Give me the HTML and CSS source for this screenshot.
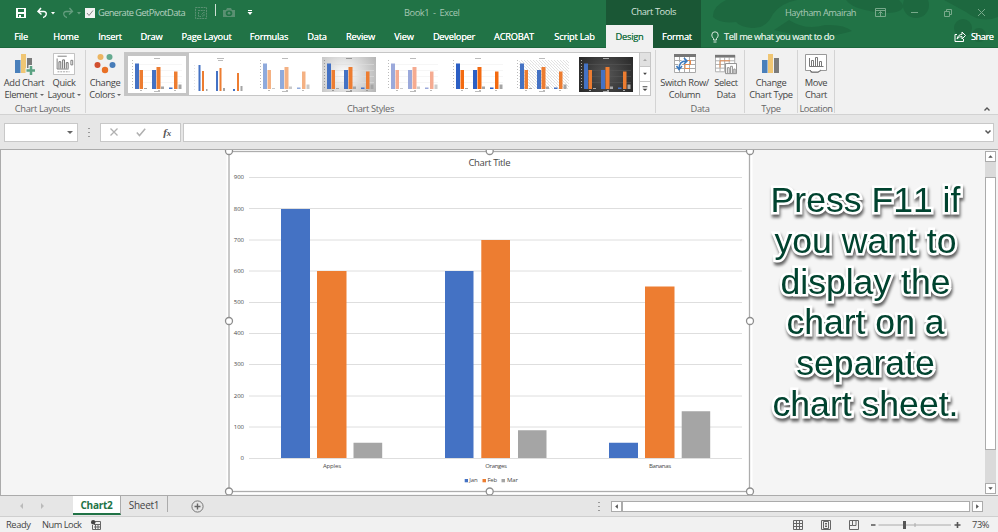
FILE: index.html
```
<!DOCTYPE html>
<html lang="en">
<head>
  <meta charset="UTF-8">
  <title>Book1 - Excel</title>
  <link rel="stylesheet" href="styles.css">
</head>
<body>
  <!-- shared drawing for the style gallery -->
  <svg class="defs">
    <symbol id="mini" viewBox="0 0 54 35">
      <path class="grid" d="M5 7.500H52M5 13.500H52M5 19.500H52M5 25.500H52"/>
      <path class="ticks" d="M2.500 3V33" stroke-dasharray="1 2"/>
      <path class="ticks" d="M24 1.500H30M24 34.500H30M10 33.500H12M28 33.500H30M44 33.500H46"/>
      <path class="jan" d="M5 6.500H9V32H5zM22 13H26V32H22zM39 30.500H42.500V32H39z"/>
      <path class="feb" d="M9.500 13H13V32H9.500zM26.500 10H30.500V32H26.500zM44 14.500H47.500V32H44z"/>
      <path class="mar" d="M14 31H17V32H14zM31 29.500H34V32H31zM48.500 27.500H51.500V32H48.500z"/>
    </symbol>
    <symbol id="mini-thin" viewBox="0 0 54 35">
      <path class="ticks faint" d="M1.500 8V34" stroke-dasharray="1 2"/>
      <path class="ticks" d="M24 1.500H31M25 3.500H30"/>
      <path class="mar" d="M13 32H14.500V34H13zM30 31H32V34H30zM47.500 29H49.500V34H47.500z"/>
      <path class="jan" d="M5.500 8H7.500V34H5.500zM23 14H25V34H23zM40 32H42V34H40z"/>
      <path class="feb" d="M9 14H11V34H9zM26.500 11H28.500V34H26.500zM44 16H46V34H44z"/>
    </symbol>
    <pattern id="hatch" width="3" height="3" patternUnits="userSpaceOnUse">
      <path d="M0 0L3 3" stroke="#ccc" stroke-width=".6"/>
    </pattern>
  </svg>

  <header class="top">
    <svg class="swirls" viewBox="0 0 297 48">
      <path d="M25 0H96Q80 3 72 14Q65 29 51 28Q39 27 35 22Q19 24 12 17Q11 7 25 0Z"/>
      <path d="M88 20Q105 31 124 25Q143 24 151 31Q119 42 73 30Z"/>
      <path d="M145 0H198Q205 6 200 10Q190 16 164 10Q150 7 145 0Z"/>
      <circle cx="215" cy="5" r="13"/><circle cx="262" cy="28" r="9"/>
      <circle cx="278" cy="35" r="7"/><path d="M243 0H297V17Q280 24 265 12Z"/>
    </svg>
    <div class="titlebar">
      <svg class="c-save" viewBox="0 0 12 12"><path fill="#fff" fill-rule="evenodd" d="M1 1H11V11H1zM3 2V5H9V2zM3 7V10H4V8H6V10H9V7z"/></svg>
      <svg class="c-undo" viewBox="0 0 20 12"><path fill="none" stroke="#fff" stroke-width="1.500" d="M5 1L2 4.500L5.500 7.500M2 4.500H8Q11 5 10 8Q9 10.500 7 10.500"/><path fill="#fff" d="M15 5H19L17 7.500z"/></svg>
      <svg class="c-redo" viewBox="0 0 20 12"><g opacity=".3"><path fill="none" stroke="#fff" stroke-width="1.300" d="M7.500 1L10.500 4.500L7 7.500M10.500 4.500H4Q1 5 2 8Q3 10.500 5 10.500"/><path fill="#fff" d="M15 5H19L17 7.500z"/></g></svg>
      <svg class="c-check" viewBox="0 0 10 10"><path fill="#f3f3f3" d="M0 0H10V10H0z"/><path fill="none" stroke="#888" d="M2 5L4 7.500L8 2.500"/></svg>
      <span class="c-pivot">Generate GetPivotData</span>
      <svg class="c-pivoticon" viewBox="0 0 12 12"><path fill="none" stroke="#5a9072" d="M.5.500H11.500V11.500H.5zM3 3.500H10M3.500 5V9.500H6M6.500 7.500L9 5V9H7" stroke-dasharray="2 .7"/></svg>
      <i class="c-bar"></i>
      <svg class="c-cam" viewBox="0 0 12 10"><path fill="#5a9072" fill-rule="evenodd" d="M0 2H3L4 0H8L9 2H12V9H0zM6 2.500A2.800 2.800 0 1 0 6 8A2.800 2.800 0 1 0 6 2.500"/><circle cx="6" cy="5.200" r="1.400" fill="#5a9072"/></svg>
      <svg class="c-more" viewBox="0 0 6 7"><path fill="#fff" d="M1 1H5V2H1zM.5 3H5.500L3 6z"/></svg>
      <span class="c-title">Book1&nbsp; -&nbsp; Excel</span>
      <span class="c-tools">Chart Tools</span>
      <span class="c-user">Haytham Amairah</span>
      <svg class="c-winopt" viewBox="0 0 11 9"><path class="line" d="M.5.500H10.500V8.500H.5zM1 2.500H10M5.500 8V4M3.500 5.500L5.500 3.500L7.500 5.500"/></svg>
      <svg class="c-min" viewBox="0 0 9 9"><path class="line" d="M1 4.500H8"/></svg>
      <svg class="c-restore" viewBox="0 0 9 9"><path class="line" d="M1.500 3.500H6.500V8.500H1.500zM3.500 3V1.500H8.500V6.500H7"/></svg>
      <svg class="c-close" viewBox="0 0 9 9"><path class="line" d="M1 1L8 8M8 1L1 8"/></svg>
    </div>
    <nav class="tabs">
      <a>File</a><a>Home</a><a>Insert</a><a>Draw</a><a>Page Layout</a><a>Formulas</a><a>Data</a>
      <a>Review</a><a>View</a><a>Developer</a><a>ACROBAT</a><a>Script Lab</a>
      <a class="active">Design</a><a class="context">Format</a>
      <svg class="bulb" viewBox="0 0 8 12"><path fill="none" stroke="#d7e7dd" d="M2.500 9V7.500Q.8 6 .8 4A3.200 3.200 0 0 1 7.200 4Q7.200 6 5.500 7.500V9zM2.500 11H5.500"/></svg>
      <span class="tell">Tell me what you want to do</span>
      <svg class="share-icon" viewBox="0 0 12 11"><path fill="none" stroke="#fff" d="M3 3.500H1V10.500H9.500V8M3 8Q4 3.500 8 3.500V1L11.500 4.500L8 8V5.500Q5 5.300 3 8Z"/></svg>
      <span class="share">Share</span>
    </nav>
  </header>

  <section class="ribbon">
    <div class="group g-layouts">
      <div class="tools">
        <div class="tool">
          <svg viewBox="0 0 22 22"><path fill="#4a80bb" d="M2 7H7.500V20H2z"/><path fill="#f0c674" d="M8 1H13V20H8z"/><path fill="#7b7b7b" d="M14 5H19V20H14z"/><path stroke="#f1f1f1" stroke-width="5" d="M18 12V22M12.500 17.500H22"/><path stroke="#5ba283" stroke-width="2.500" d="M18 13V22M13.500 17.500H22"/></svg>
          <span>Add Chart</span><span>Element <i class="dd"></i></span>
        </div>
        <div class="tool">
          <svg viewBox="0 0 24 24"><path fill="#fff" stroke="#bbb" d="M.5.500H23.500V23.500H.5z"/><path fill="none" stroke="#777" d="M5 3.500H15M4.500 6V17.500H17M19.500 8V13H21.500V8z"/><path fill="none" stroke="#666" d="M6.500 17V9.500H8.500V17M10.500 17V7.500H12.500V17M14.500 17V10.500H16.500V17"/><path stroke="#999" stroke-dasharray="2 1" d="M5 20.500H18"/></svg>
          <span>Quick</span><span>Layout <i class="dd"></i></span>
        </div>
      </div>
      <div class="caption">Chart Layouts</div>
    </div>
    <div class="group g-styles">
      <div class="tools">
        <div class="tool">
          <svg viewBox="0 0 22 22"><circle cx="6.500" cy="4" r="3" fill="#ecb561"/><circle cx="15.500" cy="4" r="3" fill="#65aa90"/><circle cx="3.500" cy="12" r="3" fill="#d2502f"/><circle cx="18.500" cy="12" r="3" fill="#477cb8"/><circle cx="11" cy="17" r="3.200" fill="#e97025"/></svg>
          <span>Change</span><span>Colors <i class="dd"></i></span>
        </div>
        <div class="gallery">
          <svg class="thumb selected"><use href="#mini"/></svg>
          <svg class="thumb"><use href="#mini-thin"/></svg>
          <svg class="thumb soft"><use href="#mini"/></svg>
          <svg class="thumb gray"><use href="#mini"/></svg>
          <svg class="thumb pale"><use href="#mini"/></svg>
          <svg class="thumb vivid"><use href="#mini"/></svg>
          <svg class="thumb"><rect x="4" y="3" width="50" height="29" fill="url(#hatch)"/><use href="#mini"/></svg>
          <svg class="thumb dark"><use href="#mini"/></svg>
        </div>
        <div class="gallery-nav">
          <svg class="off" viewBox="0 0 10 14"><path d="M3 8.500H7L5 6z"/></svg>
          <svg viewBox="0 0 10 14"><path d="M3 6H7L5 8.500z"/></svg>
          <svg viewBox="0 0 10 14"><path d="M2.500 4.500H7.500V5.500H2.500zM2.500 7H7.500L5 9.500z"/></svg>
        </div>
      </div>
      <div class="caption">Chart Styles</div>
    </div>
    <div class="group g-data">
      <div class="tools">
        <div class="tool">
          <svg viewBox="0 0 22 22"><path fill="#fff" stroke="#aaa" d="M.5 2.500H21.500V19.500H.5zM.5 7.500H21.500M.5 11.500H21.500M.5 15.500H21.500M5.500 4V19M10.500 4V19M15.500 4V19"/><path fill="#777" d="M0 1H22V4H0z"/><path fill="none" stroke="#e98a4a" d="M10 7.500H16.500V11.500H11V15.500H16"/><path fill="none" stroke="#fff" stroke-width="3" d="M5 16Q5 8 12 8"/><path fill="none" stroke="#3a78bd" stroke-width="1.600" d="M5 16Q5 8 12 8M10 5L13 8L10 11M2.500 13L5 16.500L8 13"/></svg>
          <span>Switch Row/</span><span>Column</span>
        </div>
        <div class="tool">
          <svg viewBox="0 0 24 22"><path fill="#fff" stroke="#aaa" d="M.5 2.500H21.500V19.500H.5zM.5 7.500H21.500M.5 11.500H21.500M.5 15.500H21.500M5.500 4V19M10.500 4V19M15.500 4V19"/><path fill="#777" d="M0 1H22V4H0z"/><path fill="none" stroke="#e98a4a" d="M5.500 15V7.500H16.500"/><path fill="#fff" stroke="#888" d="M11.500 10.500H23.500V21.500H11.500zM13.500 21V15H15.500V21M17 21V13.500H19V21M20.500 21V16.500H22V21"/></svg>
          <span>Select</span><span>Data</span>
        </div>
      </div>
      <div class="caption">Data</div>
    </div>
    <div class="group g-type">
      <div class="tools">
        <div class="tool">
          <svg viewBox="0 0 22 22"><path fill="#4a80bb" d="M2 7H7.500V20H2z"/><path fill="#f0c674" d="M8 1H13V20H8z"/><path fill="#7b7b7b" d="M14 5H19V20H14z"/></svg>
          <span>Change</span><span>Chart Type</span>
        </div>
      </div>
      <div class="caption">Type</div>
    </div>
    <div class="group g-location">
      <div class="tools">
        <div class="tool">
          <svg viewBox="0 0 22 22"><path fill="#fff" stroke="#999" d="M.5 1.500H21.500V17.500H16L13 19.500H6L5 17.500H.5z"/><path fill="none" stroke="#777" d="M4.500 5V13.500H18.500M6.500 13V7.500H8.500V13M10.500 13V4.500H12.500V13M14.500 13V8.500H16.500V13M5 17L7 19H13L16 17"/></svg>
          <span>Move</span><span>Chart</span>
        </div>
      </div>
      <div class="caption">Location</div>
    </div>
    <svg class="collapse" viewBox="0 0 8 6"><path fill="none" stroke="#555" stroke-width="1.400" d="M1.500 4.500L4 2L6.500 4.500"/></svg>
  </section>

  <section class="formula">
    <div class="namebox"><i class="dd"></i></div>
    <i class="grip"></i>
    <div class="fx">
      <svg viewBox="0 0 10 10"><path fill="none" stroke="#b0b0b0" stroke-width="1.300" d="M1.500 1.500L8.500 8.500M8.500 1.500L1.500 8.500"/></svg>
      <svg viewBox="0 0 10 10"><path fill="none" stroke="#b0b0b0" stroke-width="1.500" d="M.8 5.500L3.500 8.500L9.200 1.800"/></svg>
      <em>f<small>x</small></em>
    </div>
    <div class="input"><svg viewBox="0 0 8 6"><path fill="none" stroke="#555" stroke-width="1.500" d="M1.500 1.500L4 4L6.500 1.500"/></svg></div>
  </section>

  <main class="sheet">
    <svg class="chart" viewBox="223 150 534 345">
      <rect x="229" y="151.500" width="521" height="340" fill="#fff" stroke="#fff" stroke-width="5"/>
      <rect x="229" y="151.500" width="520.500" height="340" fill="#fff" stroke="#adadad" stroke-width="1.300"/>
      <text class="chart-title" x="489.500" y="166" textLength="42">Chart Title</text>
      <path stroke="#dedede" d="M249 177.500H742M249 208.500H742M249 240H742M249 271H742M249 302.500H742M249 333.500H742M249 364.500H742M249 396H742M249 427H742M249 458.500H742"/>
      <g class="axis">
        <text x="244" y="179">900</text><text x="244" y="210.500">800</text>
        <text x="244" y="241.500">700</text><text x="244" y="272.500">600</text>
        <text x="244" y="304">500</text><text x="244" y="335">400</text>
        <text x="244" y="366">300</text><text x="244" y="397.500">200</text>
        <text x="244" y="428.500">100</text><text x="244" y="460">0</text>
      </g>
      <path fill="#4472c4" d="M281 209H310V458H281zM445 271H473.500V458H445zM609 442.700H638V458H609z"/>
      <path fill="#ed7d31" d="M317 271H346.500V458H317zM481.300 240H510V458H481.300zM645 286.500H674.500V458H645z"/>
      <path fill="#a5a5a5" d="M353.500 442.700H382.200V458H353.500zM518 430.300H546.500V458H518zM681.700 411.300H710.200V458H681.700z"/>
      <g class="cats">
        <text x="332" y="468.300" textLength="18">Apples</text>
        <text x="496" y="468.300" textLength="21.500">Oranges</text>
        <text x="660" y="468.300" textLength="22">Bananas</text>
        <text x="473.500" y="482.300" textLength="8.500">Jan</text>
        <text x="492.300" y="482.300" textLength="9.500">Feb</text>
        <text x="512.500" y="482.300" textLength="11">Mar</text>
      </g>
      <path fill="#4472c4" d="M464.700 479H468V482.300H464.700z"/>
      <path fill="#ed7d31" d="M482.500 479H486V482.300H482.500z"/>
      <path fill="#a5a5a5" d="M501.500 479H505V482.300H501.500z"/>
      <g fill="#fff" stroke="#8e8e8e" stroke-width="1.300">
        <circle cx="229" cy="151" r="3.500"/><circle cx="489.700" cy="151" r="3.500"/><circle cx="750" cy="151" r="3.500"/>
        <circle cx="229" cy="321" r="3.500"/><circle cx="750" cy="321" r="3.500"/>
        <circle cx="229" cy="491.500" r="3.500"/><circle cx="489.700" cy="491.500" r="3.500"/><circle cx="750" cy="491.500" r="3.500"/>
      </g>
    </svg>
    <p class="note">Press F11 if<br>you want to<br>display the<br>chart on a<br>separate<br>chart sheet.</p>
    <div class="vscroll">
      <svg viewBox="0 0 10 10"><path d="M2.500 6.500H7.500L5 3.500z"/></svg>
      <i></i>
      <svg viewBox="0 0 10 10"><path d="M2.500 3.500H7.500L5 6.500z"/></svg>
    </div>
  </main>

  <div class="sheetbar">
    <svg class="nav" viewBox="0 0 73 20"><path fill="#bbb" d="M23 7V13L20 10zM41 7V13L44 10z"/></svg>
    <span class="sheet-tab current">Chart2</span>
    <span class="sheet-tab">Sheet1</span>
    <svg class="add" viewBox="0 0 13 13"><circle cx="6.500" cy="6.500" r="5.600" fill="none" stroke="#777"/><path stroke="#666" stroke-width="1.400" d="M3.500 6.500H9.500M6.500 3.500V9.500"/></svg>
    <i class="grip"></i>
    <div class="hscroll">
      <svg viewBox="0 0 10 10"><path d="M6.500 2.500V7.500L3.500 5z"/></svg>
      <i></i>
      <svg viewBox="0 0 10 10"><path d="M3.500 2.500V7.500L6.500 5z"/></svg>
    </div>
  </div>

  <footer class="status">
    <span class="ready">Ready</span>
    <span class="numlock">Num Lock</span>
    <svg class="macro" viewBox="0 0 10 10"><path fill="none" stroke="#666" d="M4 1.500H9.500V9.500H1.500V5M3 4.500H9M3 7H9M4.500 4V9M7 4V9"/><circle cx="2.200" cy="2.200" r="2.200" fill="#444"/></svg>
    <svg class="view" viewBox="0 0 10 10"><path class="line" d="M.5.500H9.500V9.500H.5zM.5 3.500H9.500M.5 6.500H9.500M3.500 .5V9.500M6.500 .5V9.500"/></svg>
    <svg class="view" viewBox="0 0 10 10"><path class="line" d="M.5.500H9.500V9.500H.5zM2.500 1.500H7.500V8.500H2.500zM4 3.500H6M4 5H6M4 6.500H6"/></svg>
    <svg class="view" viewBox="0 0 10 10"><path class="line" d="M.5.500H9.500V9.500H.5zM3.500 .5V5.500H7V.5M.5 5.500H3.500"/></svg>
    <svg class="zoom" viewBox="0 0 92 10"><path stroke="#555" stroke-width="1.600" d="M1 5H5.500M84.500 5H90.500M87.500 2V8"/><path stroke="#aaa" d="M8.500 5H81M45 3V7"/><path fill="#555" d="M33 1H36V9H33z"/></svg>
    <span class="pct">73%</span>
  </footer>
</body>
</html>
```
FILE: styles.css
```
* {
  box-sizing: border-box;
}

body {
  margin: 0;
  width: 998px;
  height: 532px;
  overflow: hidden;
  display: flex;
  flex-direction: column;
  background: #e6e6e6;
  color: #444;
  font-family: "Open Sans", "Noto Sans", sans-serif;
  font-size: 9.3px;
  letter-spacing: -0.25px;
  line-height: 12px;
  white-space: nowrap;
}

svg {
  display: block;
}

.defs {
  position: absolute;
  width: 0;
  height: 0;
}

/* title bar and tabs */
.top {
  position: relative;
  height: 48px;
  flex: none;
  background: #217346;
  color: #fff;
  border-bottom: 1px solid #1b673c;
}

.swirls {
  position: absolute;
  right: 0;
  top: 0;
  width: 297px;
  height: 48px;
  fill: #1d683f;
}

.titlebar {
  position: relative;
  height: 25px;
  display: grid;
  grid-template-columns: 15px 12px 9px 20px 6px 20px 3px 10px 3px 93px 4px 12px 8px 8px 12px 12px 6px 105px 114px 134px 95px 72px 84px 18px 11px 24px 9px 24px 9px 25px 9px;
  align-items: center;
}

.c-save { grid-column: 2; }
.c-undo { grid-column: 4; }
.c-redo { grid-column: 6; }
.c-check { grid-column: 8; }
.c-pivot { grid-column: 10; color: #b5d1c0; letter-spacing: -0.62px; }
.c-pivoticon { grid-column: 12; }
.c-bar { grid-column: 14; width: 1px; height: 12px; background: #d0e0d6; margin: 0 0 5px; }
.c-cam { grid-column: 15; }
.c-more { grid-column: 17; }
.c-title { grid-column: 19; padding-left: 46px; color: #a5c7b3; letter-spacing: -0.45px; }
.c-tools { grid-column: 21; align-self: stretch; line-height: 24px; text-align: center; background: #1a5735; color: #d5e3db; letter-spacing: -0.4px; }
.c-user { grid-column: 23; padding-left: 12px; color: #aac9b7; letter-spacing: -0.5px; }
.c-winopt { grid-column: 25; }
.c-min { grid-column: 27; }
.c-restore { grid-column: 29; }
.c-close { grid-column: 31; }

.titlebar .line {
  fill: none;
  stroke: #78a98b;
}

.tabs {
  position: relative;
  height: 23px;
  display: grid;
  grid-template-columns: 42px 48px 40px 43px 67px 58px 38px 49px 38px 62px 58px 63px 47px 48px 10px 8px 5px 110px 120px 12px 5px 26px;
  align-items: center;
  line-height: 23px;
  text-align: center;
  text-shadow: 0 0 0.5px currentColor;
}

.active {
  background: #f1f1f1;
  color: #217346;
}

.context {
  background: #1a5735;
}

.bulb { grid-column: 16; }
.tell { grid-column: 18; text-align: left; color: #d7e7dd; letter-spacing: -0.45px; }
.share-icon { grid-column: 20; }
.share { grid-column: 22; text-align: left; letter-spacing: -0.5px; }

/* ribbon */
.ribbon {
  height: 67px;
  flex: none;
  display: flex;
  background: #f1f1f1;
  border-bottom: 1px solid #d2d2d2;
  letter-spacing: -0.35px;
}

.group {
  height: 63px;
  margin-top: 2px;
  display: flex;
  flex-direction: column;
  justify-content: space-between;
  border-right: 1px solid #d4d4d4;
}

.g-layouts { width: 86px; }
.g-styles { width: 570px; }
.g-data { width: 89px; }
.g-type { width: 53px; }
.g-location { width: 37px; }

.tools {
  display: flex;
  height: 51px;
}

.caption {
  height: 12px;
  line-height: 16px;
  text-align: center;
  color: #666;
}

.tool {
  width: 38px;
  flex: none;
  padding-top: 3px;
  display: flex;
  flex-direction: column;
  align-items: center;
}

.tool svg {
  width: 22px;
  height: 22px;
  margin-bottom: 2px;
}

.tool span {
  display: flex;
  align-items: center;
  gap: 2px;
}

.g-layouts .tool { width: 48px; }
.g-layouts .tool + .tool { width: 32px; }
.g-data .tool { width: 57px; }
.g-data .tool + .tool { width: 26px; }
.g-type .tool { width: 52px; }
.g-location .tool { width: 36px; }
.g-location .caption { letter-spacing: -0.5px; }

.dd {
  width: 0;
  border: 2px solid transparent;
  border-top: 2.5px solid #666;
  border-bottom: 0;
}

.gallery {
  width: 516px;
  height: 44px;
  margin-top: 2px;
  display: flex;
  align-items: center;
  gap: 10.35px;
  padding-left: 2px;
  background: #fff;
  border: 1px solid #c6c6c6;
}

.thumb {
  width: 54px;
  height: 35px;
  flex: none;
  --jan: #4472c4;
  --feb: #ed7d31;
  --mar: #a5a5a5;
  --tick: #bbb;
  --grid: #f0f0f0;
}

.selected {
  box-sizing: content-box;
  border: 3px solid #c5c5c5;
  padding: 1px 2px;
  margin-left: -2px;
  margin-right: -6px;
}

.soft { --jan: #8faadc; --feb: #f4b183; --mar: #c9c9c9; --grid: #fff; }
.gray { background: radial-gradient(circle at 40% 50%, #fff, #b5b5b5); --grid: #ddd; --tick: #999; }
.pale { --jan: #9ba9db; --feb: #f5ab91; --mar: #ccc; }
.vivid { --jan: #2c5fc4; --feb: #f36a10; }
.dark { background: radial-gradient(circle, #555, #282828); --tick: #aaa; --grid: #555; }

.jan { fill: var(--jan); }
.feb { fill: var(--feb); }
.mar { fill: var(--mar); }
.ticks { fill: none; stroke: var(--tick); }
.faint { opacity: 0.4; }
.grid { fill: none; stroke: var(--grid); stroke-width: 0.6; }

.gallery-nav {
  width: 11px;
  height: 44px;
  margin-top: 2px;
  display: flex;
  flex-direction: column;
}

.gallery-nav svg {
  flex: 1;
  min-height: 0;
  width: 11px;
  background: #fff;
  border: 1px solid #c6c6c6;
  border-left: 0;
  margin-top: -1px;
  fill: #444;
}

.gallery-nav svg:first-child { margin-top: 0; }
.gallery-nav .off { background: #e1e1e1; fill: #aaa; }

.collapse {
  width: 8px;
  height: 6px;
  margin: 58px 7px 0 auto;
}

/* formula bar */
.formula {
  height: 35px;
  flex: none;
  display: flex;
  align-items: center;
  padding: 0 4px;
  border-bottom: 1px solid #ababab;
}

.namebox, .fx, .input {
  height: 19px;
  background: #fff;
  border: 1px solid #c8c8c8;
  display: flex;
  align-items: center;
}

.namebox {
  width: 74px;
  justify-content: flex-end;
  padding-right: 4px;
}

.namebox .dd {
  border-width: 3.5px 3px 0;
}

.grip {
  width: 2px;
  height: 9px;
  margin: 0 10px;
  background: repeating-linear-gradient(#999 0 1px, transparent 1px 4px);
}

.fx {
  width: 81px;
  justify-content: space-between;
  padding: 0 9px 0 8px;
}

.fx svg {
  width: 10px;
  height: 10px;
}

.fx em {
  font: italic bold 11px/14px "Liberation Serif", serif;
  color: #555;
}

.fx small {
  font-size: 9px;
}

.input {
  flex: 1;
  margin-left: 2px;
  justify-content: flex-end;
  padding-right: 1px;
}

.input svg {
  width: 8px;
  height: 6px;
}

/* chart sheet */
.sheet {
  height: 345px;
  flex: none;
  display: flex;
  background: #f5f5f5;
  border-left: 1px solid #ababab;
}

.chart {
  width: 534px;
  height: 345px;
  flex: none;
  margin-left: 222px;
}

.chart text {
  text-anchor: middle;
  letter-spacing: 0;
  fill: #484848;
}

.chart .chart-title {
  font-size: 9.5px;
}

.axis, .cats {
  font-size: 6px;
}

.chart .axis text {
  text-anchor: end;
}

.note {
  width: 217px;
  margin: 30px 0 0;
  text-align: center;
  font: 35.6px/40.8px "Liberation Sans", Arial, sans-serif;
  font-kerning: none;
  letter-spacing: 0;
  color: #00432f;
  -webkit-text-stroke: 5px #fff;
  paint-order: stroke fill;
  filter: drop-shadow(1px 3px 1.5px rgba(0, 0, 0, 0.6));
}

.vscroll {
  width: 11px;
  margin: 1px 2px 1px auto;
  display: flex;
  flex-direction: column;
  background: #dadada;
}

.vscroll svg, .vscroll i, .hscroll svg, .hscroll i {
  background: #fff;
  border: 1px solid #ababab;
  fill: #555;
}

.vscroll svg {
  width: 11px;
  height: 11px;
}

.vscroll i {
  height: 273px;
  margin: 15px 0 auto;
}

/* sheet tabs */
.sheetbar {
  height: 22px;
  flex: none;
  display: flex;
  align-items: center;
  border-top: 1px solid #ababab;
  border-bottom: 1px solid #cfcfcf;
}

.nav {
  width: 73px;
  height: 20px;
}

.sheet-tab {
  width: 47px;
  height: 16px;
  margin-bottom: 4px;
  line-height: 19px;
  text-align: center;
  font-size: 10px;
  border-right: 1px solid #ababab;
}

.current {
  width: 48px;
  height: 19px;
  margin-bottom: 1px;
  background: #fff;
  color: #217346;
  font-weight: bold;
  border-bottom: 2px solid #217346;
}

.add {
  width: 13px;
  height: 13px;
  margin-left: 23px;
}

.sheetbar .grip {
  margin-left: auto;
  margin-right: 11px;
}

.hscroll {
  width: 372px;
  height: 11px;
  margin-right: 15px;
  display: flex;
  justify-content: space-between;
}

.hscroll svg {
  width: 11px;
  height: 11px;
}

.hscroll i {
  flex: 1;
  margin-right: 2px;
}

/* status bar */
.status {
  height: 15px;
  flex: none;
  display: flex;
  align-items: center;
  background: #f1f1f1;
  letter-spacing: -0.4px;
}

.ready { width: 36px; margin-left: 6px; }
.numlock { width: 49px; letter-spacing: -0.5px; }

.macro {
  width: 10px;
  height: 10px;
  margin-right: 692px;
}

.view {
  width: 10px;
  height: 10px;
  margin-right: 18px;
}

.view .line {
  fill: none;
  stroke: #666;
}

.zoom {
  width: 92px;
  height: 10px;
  margin-left: -7px;
}

.pct { margin-left: 10px; }
```
